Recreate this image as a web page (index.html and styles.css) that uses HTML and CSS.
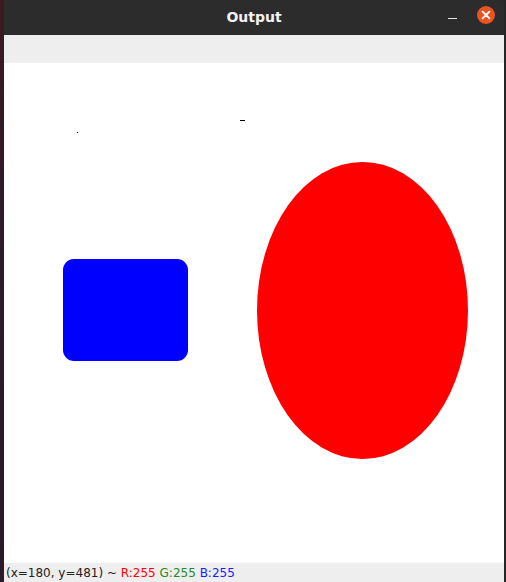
FILE: index.html
```html
<!DOCTYPE html>
<html>
<head>
<meta charset="utf-8">
<link rel="stylesheet" href="styles.css">
</head>
<body>
<div class="screen">
  <div class="edge-left"></div>
  <div class="window">
    <div class="titlebar">
      <span class="title">Output</span>
      <span class="minimize"></span>
      <span class="close">
        <svg width="18" height="18" viewBox="0 0 18 18"><circle cx="9" cy="9" r="9" fill="#e95420"/><path d="M5.6 5.6 L12.4 12.4 M12.4 5.6 L5.6 12.4" stroke="#fff" stroke-width="1.8" stroke-linecap="round"/></svg>
      </span>
    </div>
    <div class="toolbar"></div>
    <div class="canvas">
      <span class="mark dot"></span>
      <span class="mark dash"></span>
      <div class="rect"></div>
      <div class="ellipse"></div>
    </div>
    <div class="statusbar">(x=180, y=481) ~ <span class="r">R:255</span> <span class="g">G:255</span> <span class="b">B:255</span></div>
  </div>
  <div class="edge-right"></div>
</div>
</body>
</html>
```
FILE: styles.css
```css
html, body { margin: 0; padding: 0; background: #2a2a2a; }
.screen { display: flex; width: 506px; height: 582px; overflow: hidden; }
.edge-left { width: 4px; background: linear-gradient(#3b1a20, #2e1a2b 40%, #2a1a28); }
.edge-right { width: 2px; background: #262626; }
.window { width: 500px; display: flex; flex-direction: column; }
.titlebar {
  height: 35px; background: #2c2c2c; position: relative;
  display: flex; align-items: center; justify-content: center;
  border-top-right-radius: 8px;
}
.title { color: #f2f2f2; font: bold 14px "DejaVu Sans", sans-serif; margin-top: -1px; }
.minimize { position: absolute; left: 444px; top: 18px; width: 9px; height: 1px; background: #e8e8e8; }
.close { position: absolute; left: 473px; top: 6px; width: 18px; height: 18px; display: block; }
.close svg { display: block; }
.toolbar { height: 28px; background: #eeeeee; }
.canvas { height: 500px; background: #ffffff; position: relative; }
.mark { position: absolute; background: #000; }
.dot { left: 73px; top: 69px; width: 1px; height: 1px; }
.dash { left: 236px; top: 57px; width: 5px; height: 1px; }
.rect { position: absolute; left: 59px; top: 196px; width: 125px; height: 102px; background: #0000ff; border-radius: 11px; }
.ellipse { position: absolute; left: 253px; top: 99px; width: 211px; height: 297px; background: #ff0000; border-radius: 50%; }
.statusbar {
  height: 19px; background: #eeeeee; color: #222;
  font: 12px "DejaVu Sans", sans-serif; line-height: 21px; padding-left: 2px; white-space: nowrap;
}
.r { color: #ff0000; }
.g { color: #1e8c1e; }
.b { color: #1a1aff; }
```
